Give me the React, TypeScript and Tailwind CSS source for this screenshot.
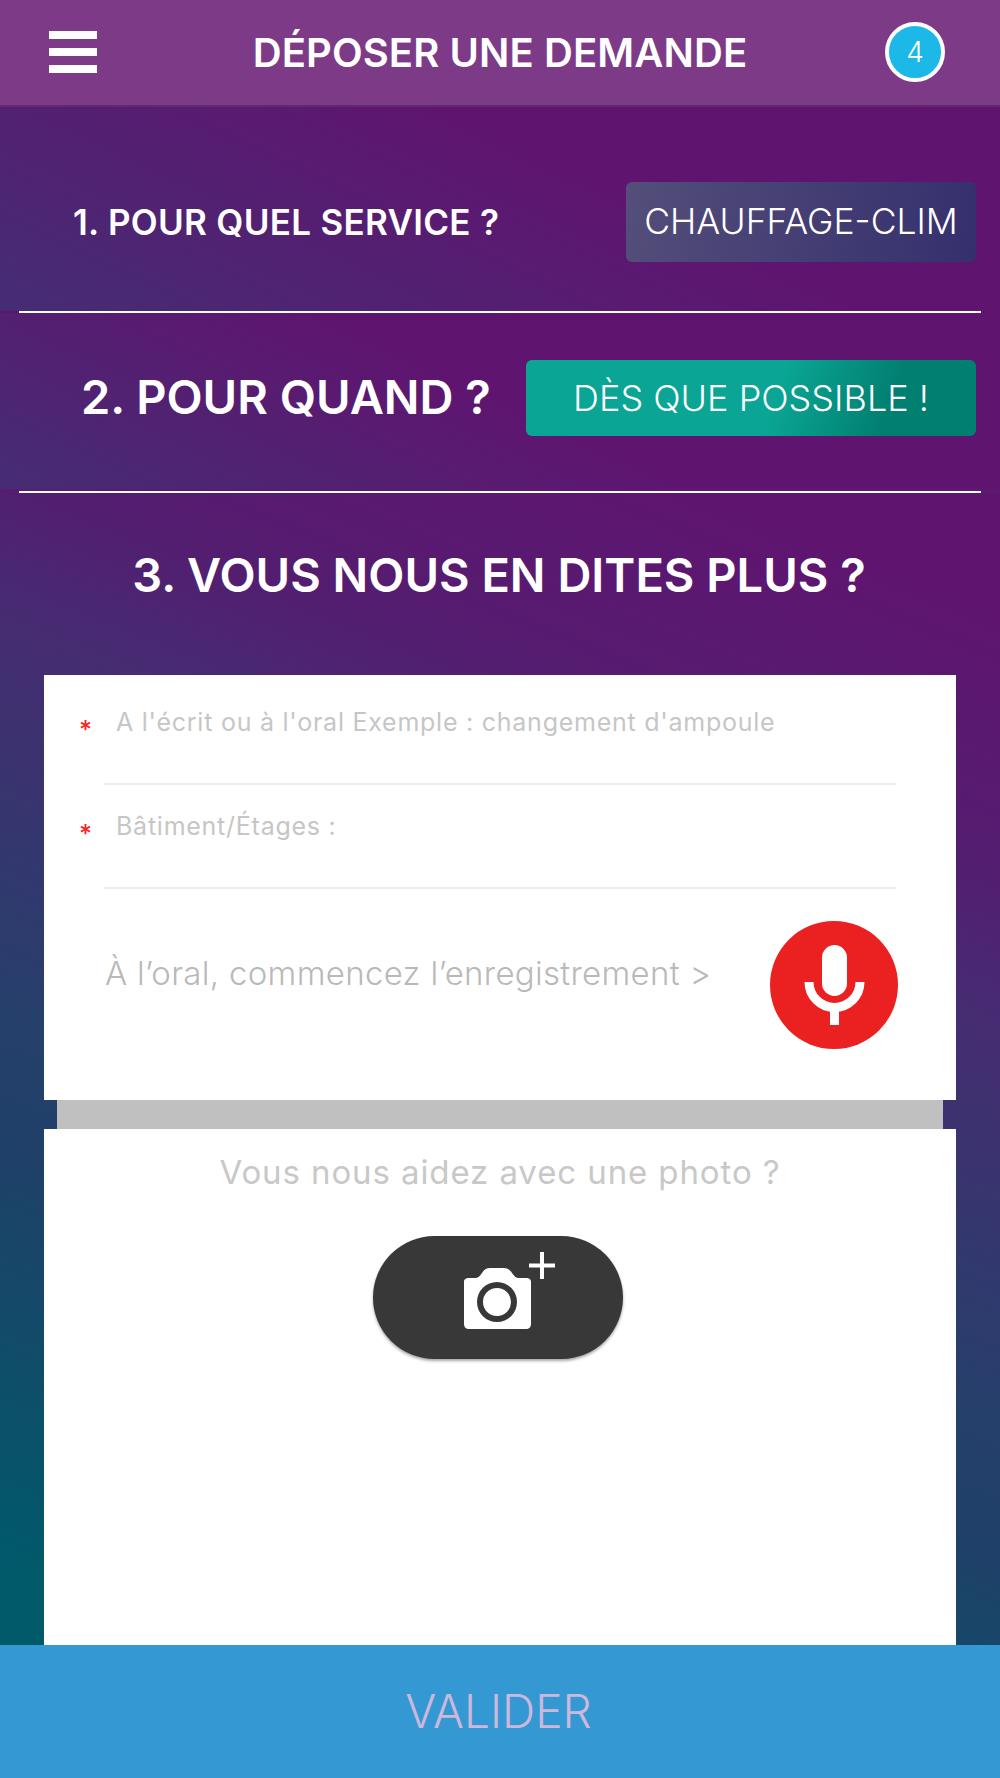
import React from "react";

const Field = ({ label }: { label: string }) => (
  <div className="relative mx-[60px]">
    <span className="absolute left-[-25px] top-[8px] text-[25px] font-medium leading-[30px] text-[#f5262b]">*</span>
    <div className="pb-[46px] pl-[12px] text-[25px] leading-[30px] tracking-[0.75px] text-[#c6c6c6]">{label}</div>
    <div className="h-[2px] bg-[#ececec]" />
  </div>
);

const MicIcon = () => (
  <svg viewBox="0 0 128 128" className="h-[128px] w-[128px] shrink-0">
    <circle cx="64" cy="64" r="64" fill="#ea2120" />
    <rect x="52" y="24" width="25" height="51" rx="12.5" fill="#fff" />
    <path d="M39 61 a25.5 25.5 0 0 0 51 0" fill="none" stroke="#fff" strokeWidth="9" />
    <rect x="60" y="85" width="9" height="19" fill="#fff" />
  </svg>
);

const CameraPlusIcon = () => (
  <svg viewBox="0 0 96 78" className="h-[78px] w-[96px]">
    <path
      fill="#fff"
      fillRule="evenodd"
      d="M4 30 C4 27 6 26 9 26 H15 C18 26 20 24 22 21 C24 18 26 16 30 16 H44 C48 16 50 18 52 21 C54 24 56 26 59 26 H66 C69 26 71 27 71 30 V72 C71 75 69 77 66 77 H9 C6 77 4 75 4 72 Z M37 30 A20 20 0 1 0 37 70 A20 20 0 1 0 37 30 Z M37 36 A14 14 0 1 1 37 64 A14 14 0 1 1 37 36 Z"
    />
    <path d="M69 13.5 H95 M82 0 V27" stroke="#fff" strokeWidth="4" />
  </svg>
);

export default function App() {
  return (
    <div className="flex h-[1778px] w-[1000px] flex-col overflow-hidden font-['Inter',sans-serif] text-white">
      <header className="grid h-[107px] shrink-0 grid-cols-[1fr_auto_1fr] items-center border-b-2 border-[#5f2a6e] bg-[#7c3a87] pb-[2px] pl-[52px] pr-[52px]">
        <div className="ml-[-3px] flex w-[48px] flex-col gap-[9px]">
          <span className="h-[8px] bg-white" />
          <span className="h-[8px] bg-white" />
          <span className="h-[8px] bg-white" />
        </div>
        <h1 className="pt-[2px] text-[40px] font-semibold leading-none tracking-[0.1px]">DÉPOSER UNE DEMANDE</h1>
        <div className="mr-[3px] flex h-[60px] w-[60px] items-center justify-center justify-self-end rounded-full border-[4px] border-white bg-[#1bb8e8] text-[28px] font-light">
          4
        </div>
      </header>

      <section className="flex h-[204px] shrink-0 items-center justify-between bg-[linear-gradient(25deg,#452d73_0%,#5f1570_60%)] pl-[73px] pr-[24px] pt-[26px]">
        <h2 className="text-[35px] font-semibold leading-none tracking-[0.3px]">1. POUR QUEL SERVICE ?</h2>
        <button className="flex h-[80px] w-[350px] items-center justify-center rounded-[6px] bg-[linear-gradient(100deg,#544e7a,#352f6e)] text-[35.5px] font-light">
          CHAUFFAGE-CLIM
        </button>
      </section>

      <div className="flex h-[2px] shrink-0 bg-[#5f1570] px-[19px]">
        <div className="w-full bg-white" />
      </div>

      <section className="flex h-[176px] shrink-0 items-center justify-between bg-[linear-gradient(25deg,#452d73_0%,#5f1570_50%)] pb-[6px] pl-[81px] pr-[24px]">
        <h2 className="pb-[3px] text-[47px] font-semibold leading-none">2. POUR QUAND ?</h2>
        <button className="flex h-[76px] w-[450px] items-center justify-center rounded-[6px] bg-[linear-gradient(110deg,#0aa594_55%,#017f70_80%)] text-[36px] font-light">
          DÈS QUE POSSIBLE !
        </button>
      </section>

      <div className="flex h-[4px] shrink-0 bg-[#5a1a70] px-[19px] pt-[2px]">
        <div className="w-full bg-white" />
      </div>

      <main className="flex min-h-0 flex-1 flex-col bg-[linear-gradient(22deg,#005a6a_5%,#1f4068_32%,#25406b_40%,#462c72_66%,#541d70_76%,#5f1570_92%)] px-[44px]">
        <h2 className="flex h-[182px] shrink-0 items-center justify-center pb-[20px] pr-[2px] text-[47px] font-semibold leading-none">
          3. VOUS NOUS EN DITES PLUS ?
        </h2>

        <div className="flex h-[425px] shrink-0 flex-col bg-white pt-[32px]">
          <Field label="A l'écrit ou à l'oral Exemple : changement d'ampoule" />
          <div className="mt-[26px]">
            <Field label="Bâtiment/Étages :" />
          </div>
          <div className="mt-[32px] flex items-center justify-between pl-[61px] pr-[58px]">
            <span className="pb-[22px] text-[33px] font-light tracking-[0.3px] text-[#b9b9b9]">À l’oral, commencez l’enregistrement &gt;</span>
            <MicIcon />
          </div>
        </div>

        <div className="mx-[13px] h-[29px] shrink-0 bg-[#c0c0c0]" />

        <div className="flex min-h-0 flex-1 flex-col items-center bg-white pt-[23px]">
          <p className="text-[33px] leading-[40px] tracking-[0.9px] text-[#c8c8c8]">Vous nous aidez avec une photo ?</p>
          <button className="mr-[4px] mt-[44px] flex h-[123px] w-[250px] items-center justify-center rounded-full bg-[#383838] pb-[13px] pl-[20px] shadow-[0_2px_3px_rgba(0,0,0,0.35)]">
            <CameraPlusIcon />
          </button>
        </div>
      </main>

      <footer className="flex h-[133px] shrink-0 items-center justify-center bg-[#3498d3] pr-[3px] text-[46px] font-light text-[#cdb8dc]">
        VALIDER
      </footer>
    </div>
  );
}
